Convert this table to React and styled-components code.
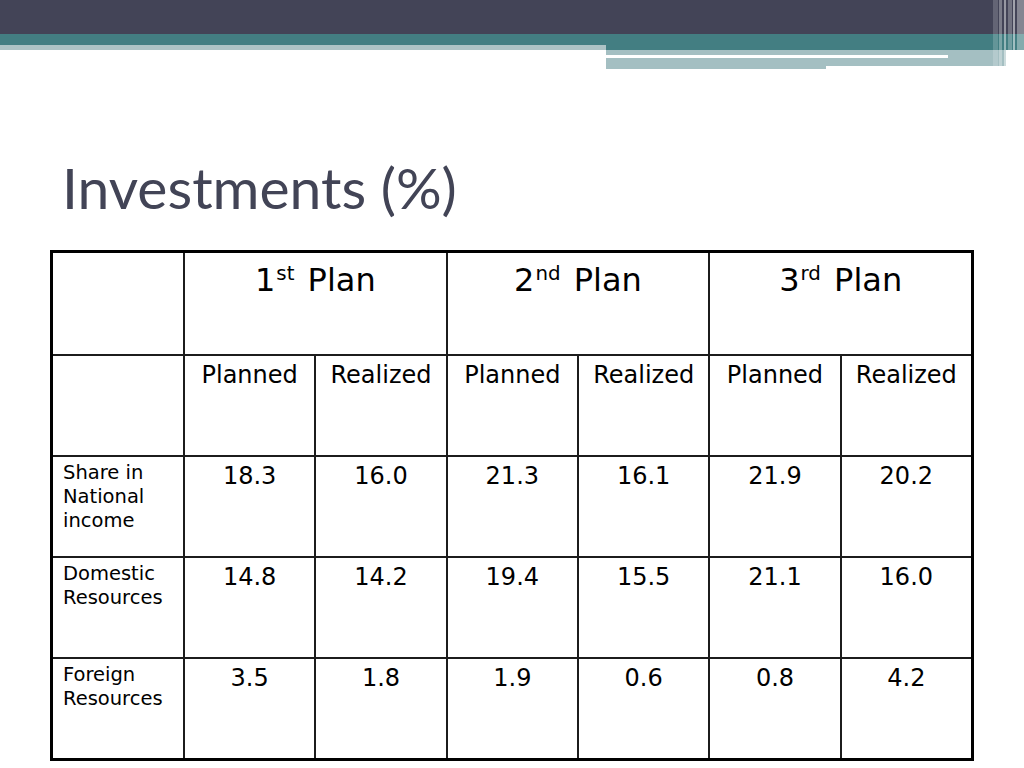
import React from 'react';
import styled, { createGlobalStyle } from 'styled-components';

const GlobalStyle = createGlobalStyle`
  html, body {
    margin: 0;
    padding: 0;
    background: #ffffff;
  }
`;

const plans = [
  { num: '1', sup: 'st' },
  { num: '2', sup: 'nd' },
  { num: '3', sup: 'rd' },
];

const rows = [
  { label: ['Share in', 'National', 'income'], values: ['18.3', '16.0', '21.3', '16.1', '21.9', '20.2'] },
  { label: ['Domestic', 'Resources'], values: ['14.8', '14.2', '19.4', '15.5', '21.1', '16.0'] },
  { label: ['Foreign', 'Resources'], values: ['3.5', '1.8', '1.9', '0.6', '0.8', '4.2'] },
];

const Banner = () => (
  <BannerSvg width="1024" height="70" viewBox="0 0 1024 70">
    <rect x="0" y="0" width="1024" height="34" fill="#434457" />
    <rect x="0" y="34" width="606" height="11" fill="#437e82" />
    <rect x="0" y="45" width="606" height="5" fill="#adc3c5" />
    <rect x="606" y="34" width="418" height="16" fill="#437e82" />
    <rect x="606" y="50" width="400" height="16" fill="#a4bfc2" />
    <rect x="606" y="55" width="342" height="3" fill="#ffffff" />
    <rect x="606" y="58" width="220" height="11" fill="#a4bfc2" />
    {/* thin vertical stripes at the right edge */}
    <rect x="993" y="0" width="5" height="66" fill="#ffffff" opacity="0.18" />
    <rect x="999" y="0" width="3" height="69" fill="#ffffff" opacity="0.3" />
    <rect x="1004" y="0" width="2" height="69" fill="#ffffff" opacity="0.45" />
    <rect x="1008" y="0" width="4" height="69" fill="#ffffff" opacity="0.25" />
    <rect x="1013" y="0" width="2" height="69" fill="#ffffff" opacity="0.5" />
    <rect x="1017" y="0" width="7" height="69" fill="#ffffff" opacity="0.35" />
  </BannerSvg>
);

export default function App() {
  return (
    <>
      <GlobalStyle />
      <Slide>
        <Banner />
        <Title>Investments (%)</Title>
        <Table>
          <colgroup>
            <col style={{ width: 130 }} />
            {Array.from({ length: 6 }).map((_, i) => (
              <col key={i} />
            ))}
          </colgroup>
          <tbody>
            <Row>
              <Cell />
              {plans.map((p) => (
                <PlanCell key={p.num} colSpan={2}>
                  {p.num}
                  <Sup>{p.sup}</Sup> Plan
                </PlanCell>
              ))}
            </Row>
            <Row>
              <Cell />
              {plans.map((p) => (
                <React.Fragment key={p.num}>
                  <Cell $center>Planned</Cell>
                  <Cell $center>Realized</Cell>
                </React.Fragment>
              ))}
            </Row>
            {rows.map((r) => (
              <Row key={r.label.join(' ')}>
                <LabelCell>
                  {r.label.map((line) => (
                    <div key={line}>{line}</div>
                  ))}
                </LabelCell>
                {r.values.map((v, i) => (
                  <Cell key={i} $center>
                    {v}
                  </Cell>
                ))}
              </Row>
            ))}
          </tbody>
        </Table>
      </Slide>
    </>
  );
}

const Slide = styled.div`
  width: 1024px;
  height: 768px;
  overflow: hidden;
  background: #ffffff;
  display: flex;
  flex-direction: column;
`;

const BannerSvg = styled.svg`
  display: block;
  flex-shrink: 0;
`;

const Title = styled.h1`
  margin: 88px 0 0 62px;
  height: 58px;
  font-family: Lato, 'Open Sans', sans-serif;
  font-weight: 400;
  font-size: 57px;
  line-height: 58px;
  color: #424456;
`;

const Table = styled.table`
  margin: 34px 0 0 50px;
  width: 924px;
  table-layout: fixed;
  border-spacing: 0;
  border: 3px solid #000;
  font-family: 'DejaVu Sans', Verdana, sans-serif;
  color: #000;

  tr:first-child > td {
    border-top: none;
  }
  tr > td:first-child {
    border-left: none;
  }
`;

const Row = styled.tr`
  height: 101px;
`;

const Cell = styled.td`
  vertical-align: top;
  border-left: 2px solid #1c1c1c;
  border-top: 2px solid #1c1c1c;
  padding: 5px 4px 0;
  text-align: ${(p) => (p.$center ? 'center' : 'left')};
  font-size: 24px;
  line-height: 29px;
`;

const PlanCell = styled(Cell)`
  text-align: center;
  font-size: 32px;
  line-height: 38px;
  padding-top: 8px;
`;

const Sup = styled.sup`
  font-size: 0.62em;
  line-height: 0;
  vertical-align: 0.55em;
  margin-left: 1px;
  margin-right: 3px;
`;

const LabelCell = styled(Cell)`
  font-size: 19.5px;
  line-height: 24px;
  padding: 4px 4px 0 10px;
`;
